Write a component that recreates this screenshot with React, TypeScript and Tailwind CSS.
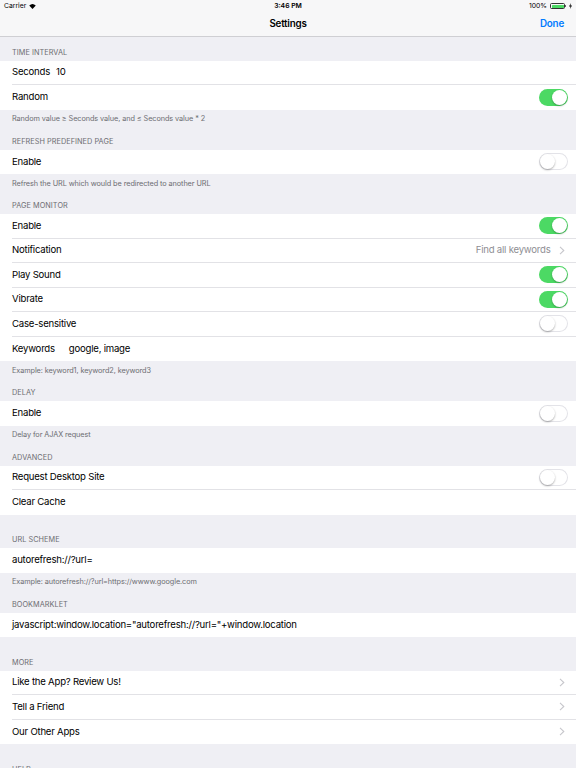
import { ReactNode } from 'react'

type Row =
  | { kind: 'toggle'; label: string; on: boolean }
  | { kind: 'value'; label: string; value?: string; valueGap?: string }
  | { kind: 'detail'; label: string; detail?: string }
  | { kind: 'text'; label: string }

interface Section {
  header: string
  rows: Row[]
  footer?: string
}

const sections: Section[] = [
  {
    header: 'Time Interval',
    rows: [
      { kind: 'value', label: 'Seconds', value: '10', valueGap: 'ml-[6px]' },
      { kind: 'toggle', label: 'Random', on: true },
    ],
    footer: 'Random value ≥ Seconds value, and ≤ Seconds value * 2',
  },
  {
    header: 'Refresh Predefined Page',
    rows: [{ kind: 'toggle', label: 'Enable', on: false }],
    footer: 'Refresh the URL which would be redirected to another URL',
  },
  {
    header: 'Page Monitor',
    rows: [
      { kind: 'toggle', label: 'Enable', on: true },
      { kind: 'detail', label: 'Notification', detail: 'Find all keywords' },
      { kind: 'toggle', label: 'Play Sound', on: true },
      { kind: 'toggle', label: 'Vibrate', on: true },
      { kind: 'toggle', label: 'Case-sensitive', on: false },
      { kind: 'value', label: 'Keywords', value: 'google, image', valueGap: 'ml-[14px]' },
    ],
    footer: 'Example: keyword1, keyword2, keyword3',
  },
  {
    header: 'Delay',
    rows: [{ kind: 'toggle', label: 'Enable', on: false }],
    footer: 'Delay for AJAX request',
  },
  {
    header: 'Advanced',
    rows: [
      { kind: 'toggle', label: 'Request Desktop Site', on: false },
      { kind: 'text', label: 'Clear Cache' },
    ],
  },
  {
    header: 'URL Scheme',
    rows: [{ kind: 'text', label: 'autorefresh://?url=' }],
    footer: 'Example: autorefresh://?url=https://wwww.google.com',
  },
  {
    header: 'Bookmarklet',
    rows: [{ kind: 'text', label: 'javascript:window.location="autorefresh://?url="+window.location' }],
  },
  {
    header: 'More',
    rows: [
      { kind: 'detail', label: 'Like the App? Review Us!' },
      { kind: 'detail', label: 'Tell a Friend' },
      { kind: 'detail', label: 'Our Other Apps' },
    ],
  },
  {
    header: 'Help',
    rows: [{ kind: 'detail', label: 'FAQ' }],
  },
]

function Toggle({ on }: { on: boolean }) {
  return (
    <div
      className={
        on
          ? 'relative h-[17px] w-[28.5px] rounded-full bg-[#4cd964]'
          : 'relative h-[17px] w-[28.5px] rounded-full bg-white shadow-[inset_0_0_0_1px_#e3e3e8]'
      }
    >
      <div
        className={
          on
            ? 'absolute top-[1px] right-[1px] h-[15px] w-[15px] rounded-full bg-white shadow-[0_1px_2px_rgba(0,0,0,0.28)]'
            : 'absolute top-[1px] left-[1px] h-[15px] w-[15px] rounded-full bg-white shadow-[0_1px_2px_rgba(0,0,0,0.32)]'
        }
      />
    </div>
  )
}

function Chevron() {
  return (
    <svg width="6" height="9" viewBox="0 0 6 9" className="ml-[8px] mr-[3px]">
      <path d="M1 0.8 L4.8 4.5 L1 8.2" fill="none" stroke="#c7c7cc" strokeWidth="1.1" />
    </svg>
  )
}

function RowView({ row, last }: { row: Row; last: boolean }) {
  let right: ReactNode = null
  if (row.kind === 'toggle') right = <Toggle on={row.on} />
  if (row.kind === 'detail')
    right = (
      <div className="flex items-center">
        {row.detail && <span className="text-[9.6px] tracking-[-0.23px] text-[#8e8e93]">{row.detail}</span>}
        <Chevron />
      </div>
    )

  return (
    <div className="pl-[12px]">
      <div
        className={
          last
            ? 'flex h-[24.5px] items-center justify-between pr-[8.5px]'
            : 'flex h-[24.5px] items-center justify-between border-b border-[#e2e2e6] pr-[8.5px]'
        }
      >
        <div className="flex items-center text-[9.6px] tracking-[-0.23px] text-black whitespace-nowrap">
          <span>{row.label}</span>
          {row.kind === 'value' && <span className={row.valueGap}>{row.value}</span>}
        </div>
        {right}
      </div>
    </div>
  )
}

function StatusBar() {
  return (
    <div className="relative flex h-[12px] items-center justify-between px-[4px] text-[6.8px] text-black">
      <div className="flex items-center gap-[3px]">
        <span>Carrier</span>
        <svg width="7" height="5" viewBox="0 0 14 10">
          <path d="M7 10 L0.5 3.2 A9.5 9.5 0 0 1 13.5 3.2 Z" fill="#000" />
        </svg>
      </div>
      <span className="absolute left-1/2 -translate-x-1/2 font-semibold">3:46 PM</span>
      <div className="flex items-center gap-[3px]">
        <span>100%</span>
        <div className="flex items-center">
          <div className="h-[6px] w-[15px] rounded-[1.5px] border border-[#333] p-[0.5px]">
            <div className="h-full w-full rounded-[0.5px] bg-[#4cd964]" />
          </div>
          <div className="h-[2.5px] w-[1px] rounded-r-sm bg-[#333]" />
        </div>
        <svg width="3" height="6" viewBox="0 0 6 12">
          <path d="M4 0 L0 7 L3 7 L2 12 L6 5 L3 5 Z" fill="#000" />
        </svg>
      </div>
    </div>
  )
}

function NavBar() {
  return (
    <div className="relative flex h-[25px] items-center justify-end border-b border-[#cfcfd3] px-[12px]">
      <span className="absolute left-1/2 -translate-x-1/2 text-[9.8px] font-semibold tracking-[-0.2px] text-black">Settings</span>
      <span className="text-[9.8px] font-semibold tracking-[-0.2px] text-[#007aff]">Done</span>
    </div>
  )
}

export default function App() {
  return (
    <div className="h-[768px] w-[576px] overflow-hidden bg-[#efeff4] font-[Inter,Roboto,sans-serif]">
      <div className="bg-[#f7f7f8]">
        <StatusBar />
        <NavBar />
      </div>
      {sections.map((s, i) => {
        const prev = sections[i - 1]
        const extraGap = i > 0 && !prev.footer
        return (
          <div key={s.header}>
            {extraGap && <div className="h-[10px]" />}
            <div className="flex h-[23.5px] items-end px-[12px] pb-[4px] text-[7.3px] uppercase leading-[9px] tracking-[0.05px] text-[#6d6d72]">
              {s.header}
            </div>
            <div className="bg-white">
              {s.rows.map((r, j) => (
                <RowView key={j} row={r} last={j === s.rows.length - 1} />
              ))}
            </div>
            {s.footer && (
              <div className="h-[16.5px] px-[12px] pt-[4.5px] text-[7.3px] leading-[9px] tracking-[-0.08px] text-[#6d6d72]">
                {s.footer}
              </div>
            )}
          </div>
        )
      })}
    </div>
  )
}
